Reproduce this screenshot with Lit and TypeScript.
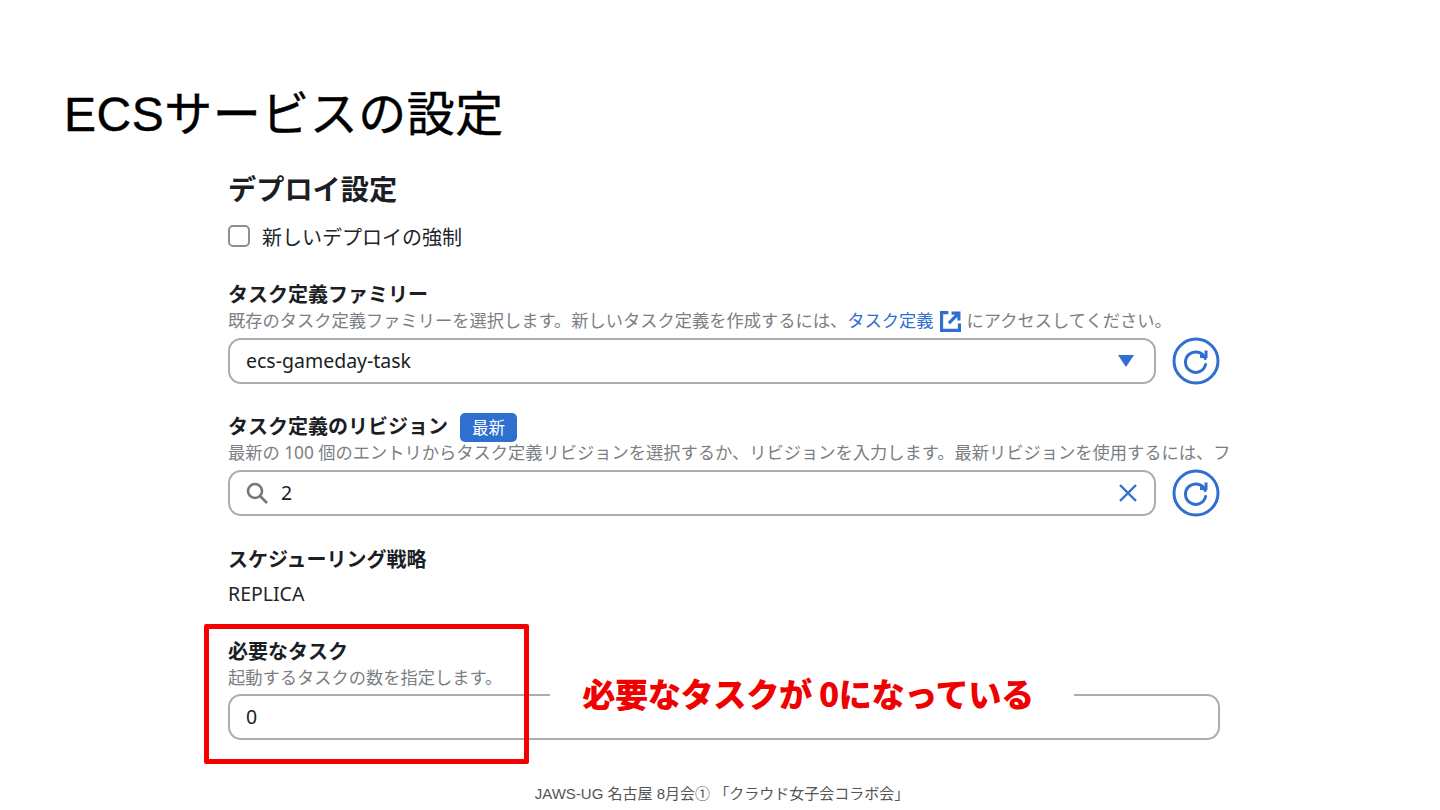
import { LitElement, html, css } from "lit";
import { customElement } from "lit/decorators.js";

const refresh = html`<svg class="refresh" width="48" height="48" viewBox="0 0 48 48" fill="none" stroke="#2f6fd0" stroke-width="3">
  <circle cx="24" cy="24" r="22"/>
  <path d="M33.2 21.5 A10.2 10.2 0 1 0 33.6 27.5" stroke-linecap="round"/>
  <path d="M28 19.6 H34 V13.6" stroke-linejoin="miter"/>
</svg>`;

@customElement("app-root")
export class AppRoot extends LitElement {
  static styles = css`
    :host { display: block; width: 1440px; height: 810px; background: #fff; overflow: hidden; position: relative;
      font-family: "Noto Sans", "Noto Sans CJK JP", sans-serif; color: #16191f; }
    .title { margin: 0; padding: 86px 0 0 64px; height: 58px; font: 400 48px/58px "Liberation Sans", "Noto Sans CJK JP", sans-serif; color: #000; letter-spacing: 0.5px; -webkit-text-stroke: 0.4px #000; }
    .form { margin: 26px 0 0 228px; width: 1002px; overflow: hidden; }
    h2 { margin: 0; font-size: 28.2px; line-height: 38px; font-weight: 700; color: #1b1e24; white-space: nowrap; }
    .check { display: flex; align-items: center; gap: 12px; margin-top: 13px; height: 30px; font-size: 20px; color: #22252a; }
    .box { box-sizing: border-box; width: 22px; height: 22px; border: 2px solid #8b8f94; border-radius: 5px; }
    .label { display: flex; align-items: center; gap: 12px; font-size: 20px; line-height: 30px; font-weight: 700; color: #1b1e24; white-space: nowrap; }
    .desc { font-size: 17.25px; line-height: 24px; margin-top: -1px; color: #7b7f85; white-space: nowrap; display: flex; align-items: center; }
    .desc a { color: #2f6fd0; margin-right: 6px; }
    .desc svg { margin-right: 6px; }
    .row { display: flex; align-items: center; gap: 16px; margin-top: 4px; }
    .field { box-sizing: border-box; width: 928px; height: 46px; border: 2px solid #a9acb0; border-radius: 13px; display: flex; align-items: center;
      padding: 0 16px 1px; font-size: 19.5px; color: #1b1e24; flex: none; }
    .grow { flex: 1; }
    .f1 { margin-top: 29px; }
    .f2 { margin-top: 27px; }
    .f3 { margin-top: 28px; }
    .value { font-size: 19.5px; line-height: 30px; margin-top: 4px; color: #22252a; }
    .f4 { margin-top: 28px; }
    .badge { background: #2f6fd0; color: #fff; font-size: 16.5px; font-weight: 400; line-height: 29px; height: 29px; width: 57px; text-align: center; border-radius: 5px; }
    .search { margin-right: 13px; }
    .wide { width: 992px; }
    .triangle { margin-right: 4px; }
    .marker { position: absolute; left: 204px; top: 624px; width: 325px; height: 140px; box-sizing: border-box; border: 5px solid #f40000; border-radius: 2px; }
    .note { position: absolute; left: 550px; top: 671px; width: 524px; height: 47px; box-sizing: border-box; padding-right: 8px; background: #fff; text-align: center;
      font-size: 33.2px; line-height: 44px; font-weight: 900; color: #f00000; white-space: nowrap; letter-spacing: -0.4px; font-family: "Noto Sans CJK JP", sans-serif; }
    .foot { position: absolute; left: 4px; right: 0; top: 783px; text-align: center; font: 400 15px/22px "Liberation Sans", "Noto Sans CJK JP", sans-serif; color: #555; }
  `;

  render() {
    return html`
      <h1 class="title">ECSサービスの設定</h1>
      <div class="form">
        <h2>デプロイ設定</h2>
        <div class="check"><span class="box"></span><span>新しいデプロイの強制</span></div>

        <div class="f1">
          <div class="label">タスク定義ファミリー</div>
          <div class="desc">既存のタスク定義ファミリーを選択します。新しいタスク定義を作成するには、<a>タスク定義</a>
            <svg width="21" height="21" viewBox="0 0 20 20" fill="none" stroke="#2f6fd0" stroke-width="3">
              <path d="M8 1.5 H1.5 V18.5 H18.5 V12"/><path d="M8.5 11.5 L17.5 2.5 M11 2 H18 V9"/>
            </svg>にアクセスしてください。</div>
          <div class="row">
            <div class="field"><span class="grow">ecs-gameday-task</span>
              <svg class="triangle" width="16" height="12" viewBox="0 0 16 12"><path d="M0 0 H16 L8 12 Z" fill="#2f6fd0"/></svg>
            </div>
            ${refresh}
          </div>
        </div>

        <div class="f2">
          <div class="label">タスク定義のリビジョン<span class="badge">最新</span></div>
          <div class="desc">最新の 100 個のエントリからタスク定義リビジョンを選択するか、リビジョンを入力します。最新リビジョンを使用するには、フ</div>
          <div class="row">
            <div class="field">
              <svg class="search" width="22" height="22" viewBox="0 0 22 22" fill="none" stroke="#73777c" stroke-width="2.6">
                <circle cx="9" cy="9" r="7"/><path d="M14 14 L21 21"/>
              </svg>
              <span class="grow">2</span>
              <svg width="20" height="20" viewBox="0 0 20 20" fill="none" stroke="#2f6fd0" stroke-width="2.4"><path d="M2 2 L18 18 M18 2 L2 18"/></svg>
            </div>
            ${refresh}
          </div>
        </div>

        <div class="f3">
          <div class="label">スケジューリング戦略</div>
          <div class="value">REPLICA</div>
        </div>

        <div class="f4">
          <div class="label">必要なタスク</div>
          <div class="desc">起動するタスクの数を指定します。</div>
          <div class="row"><div class="field wide">0</div></div>
        </div>
      </div>
      <div class="marker"></div>
      <div class="note">必要なタスクが 0になっている</div>
      <div class="foot">JAWS-UG 名古屋 8月会① 「クラウド女子会コラボ会」</div>
    `;
  }
}
